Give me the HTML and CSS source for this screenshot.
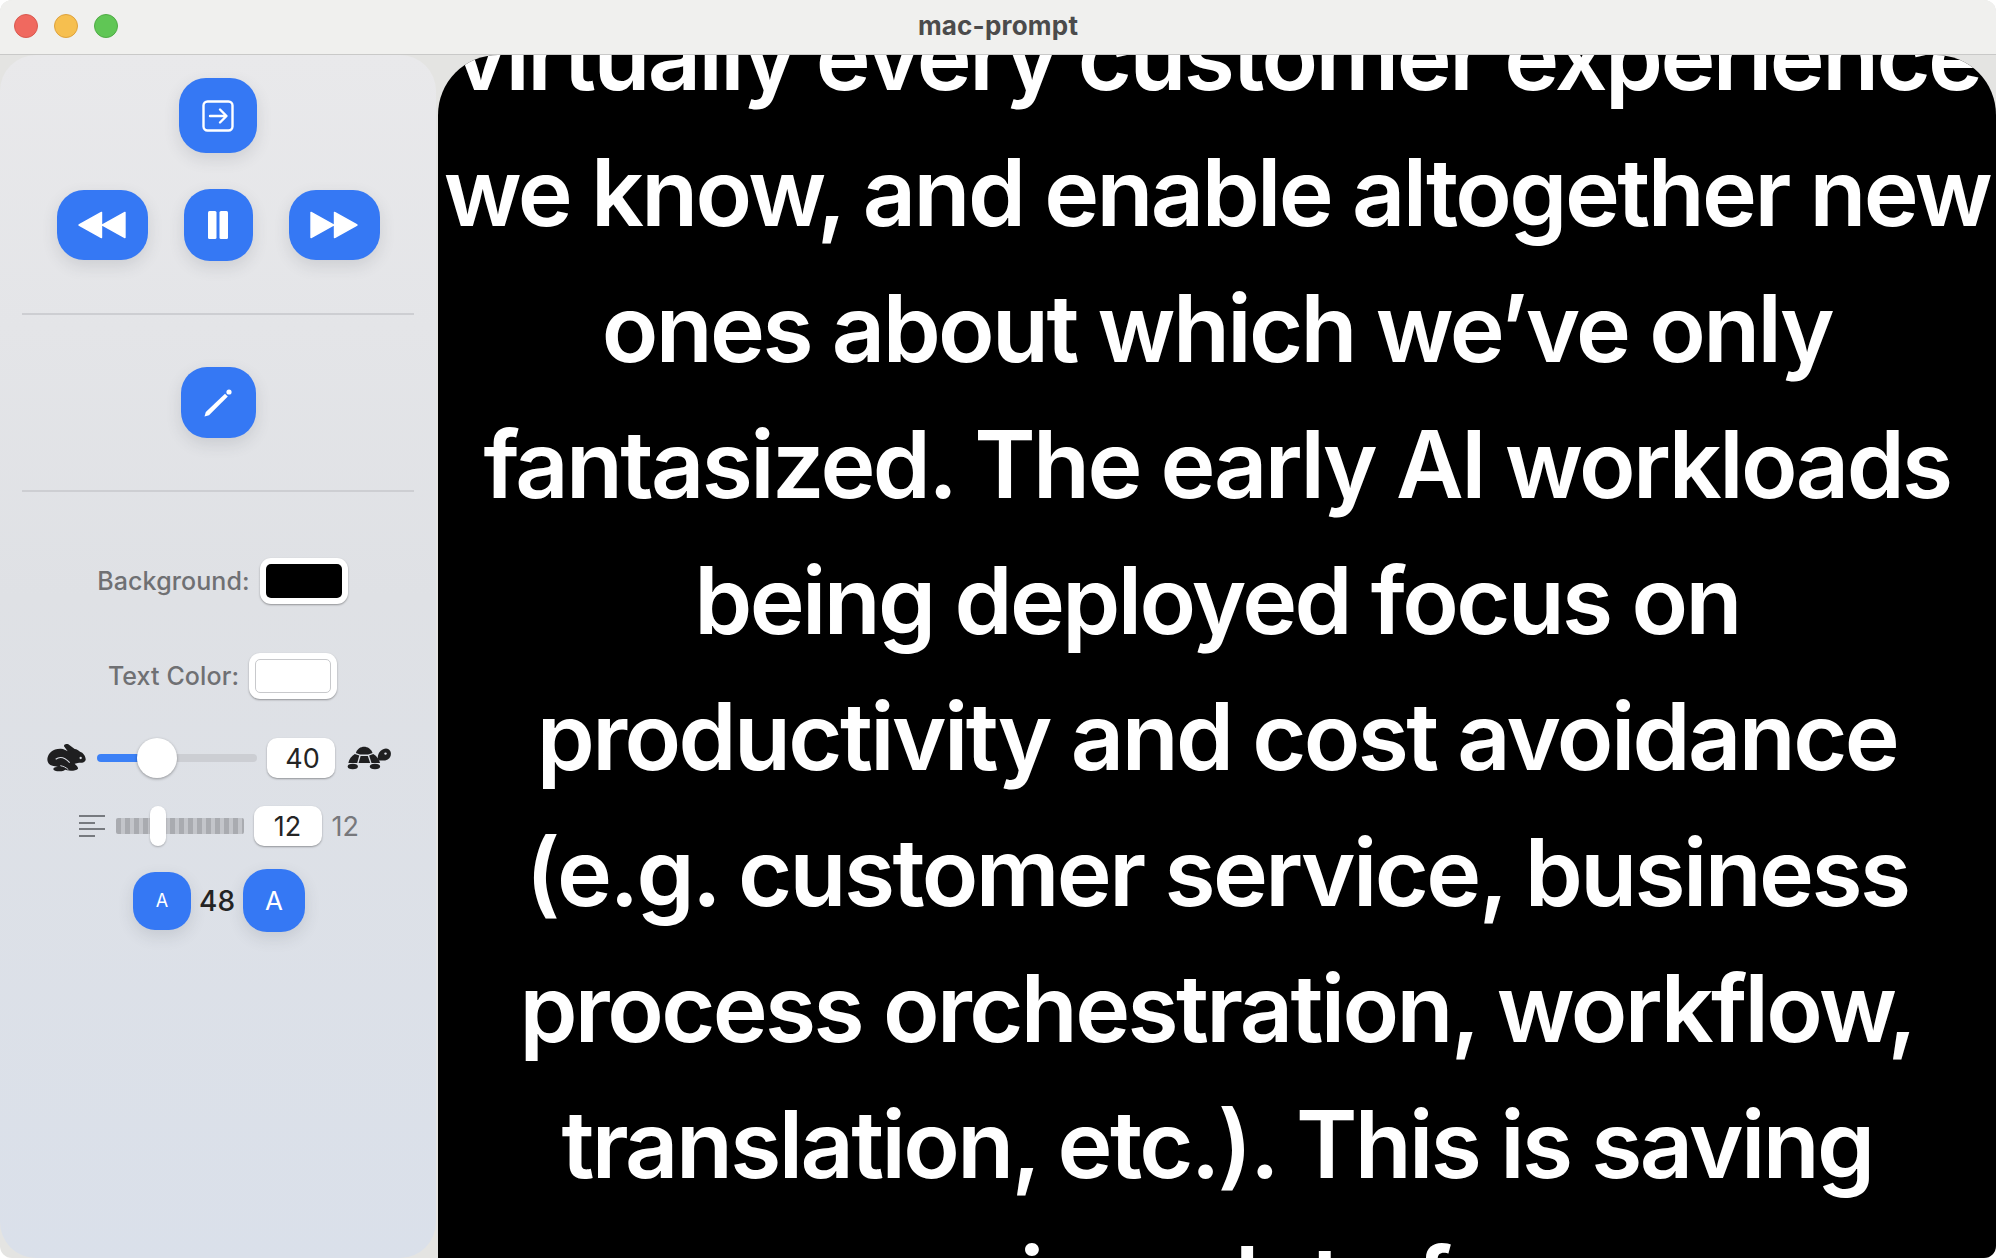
FILE: index.html
```html
<!DOCTYPE html>
<html lang="en">
<head>
<meta charset="utf-8">
<title>mac-prompt</title>
<link rel="stylesheet" href="styles.css">
</head>
<body>
<div class="window">
  <header class="titlebar">
    <div class="lights">
      <span class="light red"></span>
      <span class="light yellow"></span>
      <span class="light green"></span>
    </div>
    <div class="title">mac-prompt</div>
  </header>
  <div class="content">
    <aside class="sidebar">
      <div class="row first">
        <button class="btn btn-start">
          <svg width="32" height="32" viewBox="0 0 32 32" fill="none" stroke="#fff" stroke-width="2.4" stroke-linecap="round" stroke-linejoin="round"><rect x="1.5" y="1.5" width="29" height="29" rx="4"/><path d="M8 16h16M18 9.5l6.5 6.5-6.5 6.5"/></svg>
        </button>
      </div>
      <div class="row transport">
        <button class="btn btn-skip">
          <svg class="skip-icon" width="48" height="28" viewBox="0 0 46 26" fill="#fff" stroke="#fff" stroke-width="1.4" stroke-linejoin="round"><path d="M1 13 22.5 1v24zM23.5 13 45 1v24z"/></svg>
        </button>
        <button class="btn btn-pause">
          <svg width="20" height="28" viewBox="0 0 20 28" fill="#fff"><rect width="8.5" height="28" rx="1.5"/><rect x="11.5" width="8.5" height="28" rx="1.5"/></svg>
        </button>
        <button class="btn btn-skip">
          <svg class="skip-icon" width="48" height="28" viewBox="0 0 46 26" fill="#fff" stroke="#fff" stroke-width="1.4" stroke-linejoin="round"><path d="M45 13 23.5 1v24zM22.5 13 1 1v24z"/></svg>
        </button>
      </div>
      <div class="divider d-one"></div>
      <div class="row">
        <button class="btn btn-edit">
          <svg width="28" height="28" viewBox="0 0 28 28" fill="#fff"><path d="M0.5 27.5 1.8 23 21 4.8 23.8 7.5 5 26.2Z"/><circle cx="25" cy="3" r="2.6"/></svg>
        </button>
      </div>
      <div class="divider d-two"></div>
      <div class="row swatch-row bg-row">
        <span class="label">Background:</span>
        <span class="swatch"><span class="swatch-fill black"></span></span>
      </div>
      <div class="row swatch-row text-row">
        <span class="label">Text Color:</span>
        <span class="swatch"><span class="swatch-fill light-fill"></span></span>
      </div>
      <div class="row speed-row">
        <svg class="hare" width="40" height="30" viewBox="50 40 120 90"><path fill="#1f1f20" d="M51 88C53 70 68 56 92 57 100 58 107 61 112 65L101 50C100 43 108 41 114 44L133 58C140 58 144 63 149 66 159 69 167 80 166 91 164 99 153 100 146 99L133 102C138 108 144 111 143 117 136 125 112 125 101 119 90 112 70 110 60 106 54 102 51 96 51 88Z"/><path fill="none" stroke="#d9dce3" stroke-width="3.5" d="M76 89C90 78 104 84 118 99"/><path fill="none" stroke="#d9dce3" stroke-width="3" d="M90 108C100 110 108 114 114 120"/><circle cx="151" cy="85" r="3.5" fill="#d9dce3"/><ellipse cx="87" cy="118" rx="18" ry="7" fill="#1f1f20"/></svg>
        <div class="speed-slider">
          <span class="fill"></span>
          <span class="knob"></span>
          <span class="rest"></span>
        </div>
        <span class="field speed-field">40</span>
        <svg class="tortoise" width="45" height="26" viewBox="50 50 132 76" fill="#1f1f20"><path d="M76 73C84 49 116 49 125 73L112 78H88Z"/><path d="M54 103C56 90 63 82 73 76L86 81 80 103Z"/><path d="M90 82H111L118 103H84Z"/><path d="M127 76C138 82 144 92 147 103H122L115 81Z"/><ellipse cx="67" cy="113" rx="15" ry="8"/><ellipse cx="132" cy="113" rx="15" ry="8"/><path d="M142 95C134 72 158 54 172 62 184 70 180 92 162 95Z"/><circle cx="163" cy="75" r="3.5" fill="#d9dce3"/></svg>
      </div>
      <div class="row lines-row">
        <span class="lines-icon"><i class="ln long"></i><i class="ln short"></i><i class="ln long"></i><i class="ln short"></i></span>
        <div class="ticks"><span class="thumb"></span></div>
        <span class="field lines-field">12</span>
        <span class="lines-value">12</span>
      </div>
      <div class="row size-row">
        <button class="btn btn-small">A</button>
        <span class="size-value">48</span>
        <button class="btn btn-large">A</button>
      </div>
    </aside>
    <main class="panel">
      <p class="script">virtually every customer experience<br>we know, and enable altogether new<br>ones about which we’ve only<br>fantasized. The early AI workloads<br>being deployed focus on<br>productivity and cost avoidance<br>(e.g. customer service, business<br>process orchestration, workflow,<br>translation, etc.). This is saving<br>companies a lot of money</p>
    </main>
  </div>
</div>
</body>
</html>
```
FILE: styles.css
```css
* { box-sizing: border-box; }
html, body { margin: 0; height: 100%; background: #fff; overflow: hidden; }
body { font-family: Inter, "Liberation Sans", sans-serif; }
.window { width: 1996px; height: 1258px; display: flex; flex-direction: column; border-radius: 12px; overflow: hidden; background: #e4e4e2; }
.titlebar { height: 55px; flex: none; background: #f0f0ee; border-bottom: 1px solid #c9c9c8; display: flex; align-items: center; padding-left: 14px; padding-bottom: 3px; z-index: 2; }
.lights { display: flex; gap: 16px; width: 104px; flex: none; }
.light { width: 24px; height: 24px; border-radius: 50%; border: 1px solid; }
.red { background: #f0695f; border-color: #d9594f; }
.yellow { background: #f6bf4f; border-color: #dea23c; }
.green { background: #60c655; border-color: #4fab45; }
.title { flex: 1; text-align: center; padding-right: 118px; font-size: 26px; font-weight: 700; color: #4b4b4b; letter-spacing: 0.2px; }
.content { flex: 1; display: flex; min-height: 0; }
.sidebar { width: 436px; flex: none; height: 100%; display: flex; flex-direction: column; align-items: stretch; padding-top: 23px; border-radius: 36px; background: linear-gradient(180deg, #e9e9eb 0%, #dfe1e5 45%, #dae0ea 100%); }
.row { display: flex; justify-content: center; align-items: center; }
.btn { border: 0; padding: 0; margin: 0; display: flex; align-items: center; justify-content: center; background: #3578f4; color: #fff; box-shadow: 0 6px 16px rgba(60, 65, 80, .14); font-family: inherit; }
.btn-start { width: 78px; height: 75px; border-radius: 27px; }
.transport { margin-top: 36px; gap: 36px; }
.btn-skip { width: 91px; height: 70px; border-radius: 27px; }
.btn-pause { width: 69px; height: 72px; border-radius: 26px; }
.divider { height: 2px; margin-left: 22px; margin-right: 22px; background: #cdced2; }
.d-one { margin-top: 52px; margin-bottom: 52px; }
.btn-edit { width: 75px; height: 71px; border-radius: 26px; }
.d-two { margin-top: 52px; }
.swatch-row { padding-left: 9px; gap: 10px; }
.bg-row { margin-top: 66px; }
.text-row { margin-top: 49px; }
.label { font-size: 25px; font-weight: 500; color: #6f7073; letter-spacing: 0.1px; }
.swatch { width: 88px; height: 46px; padding: 6px; background: #fff; border-radius: 11px; box-shadow: 0 1px 2px rgba(0, 0, 0, .35); display: block; }
.swatch-fill { display: block; width: 100%; height: 100%; border-radius: 5px; }
.black { background: #000; }
.light-fill { background: #fff; border: 1px solid #c8c9cc; }
.speed-row { margin-top: 39px; height: 40px; padding-left: 2px; }
.hare { margin-right: 10px; flex: none; }
.speed-slider { width: 160px; height: 40px; display: flex; align-items: center; flex: none; }
.fill { width: 41px; height: 8px; background: #3b80f6; border-radius: 4px 0 0 4px; margin-right: -1px; }
.knob { width: 40px; height: 40px; border-radius: 50%; background: #fff; box-shadow: 0 1px 3px rgba(0, 0, 0, .35); flex: none; z-index: 1; }
.rest { flex: 1; height: 8px; background: #ccced3; border-radius: 0 4px 4px 0; margin-left: -1px; }
.field { width: 68px; height: 40px; flex: none; display: flex; align-items: center; justify-content: center; background: #fff; border-radius: 10px; box-shadow: 0 1px 2px rgba(0, 0, 0, .35); font-size: 27px; color: #242424; }
.speed-field { margin-left: 10px; padding-left: 4px; }
.tortoise { margin-left: 12px; flex: none; }
.lines-row { margin-top: 28px; height: 40px; padding-left: 2px; }
.lines-icon { width: 26px; height: 22px; flex: none; display: flex; flex-direction: column; justify-content: space-between; }
.ln { display: block; height: 2px; background: #777a7f; }
.long { width: 26px; }
.short { width: 16px; }
.ticks { width: 128px; height: 16px; margin-left: 11px; flex: none; position: relative; border-radius: 2px; background: repeating-linear-gradient(90deg, #a9abb0 0 5px, #c3c5ca 5px 9px); }
.thumb { position: absolute; left: 34px; top: -12px; width: 16px; height: 40px; border-radius: 8px; background: #fff; box-shadow: 0 1px 2px rgba(0, 0, 0, .25); }
.lines-field { margin-left: 10px; }
.lines-value { margin-left: 10px; width: 28px; font-size: 27px; color: #77787c; }
.size-row { margin-top: 23px; height: 63px; padding-left: 2px; }
.btn-small { width: 58px; height: 58px; border-radius: 22px; font-size: 18px; }
.btn-large { width: 62px; height: 63px; border-radius: 24px; font-size: 26px; }
.size-value { width: 52px; text-align: center; font-size: 28px; font-weight: 500; color: #242424; }
.panel { flex: 1; min-width: 0; margin-left: 2px; background: #000; border-radius: 60px 60px 0 0; overflow: hidden; text-align: center; }
.script { margin: -67px -20px 0; color: #fff; font-size: 93px; line-height: 136px; font-weight: 640; white-space: nowrap; letter-spacing: -2.6px; }
```
